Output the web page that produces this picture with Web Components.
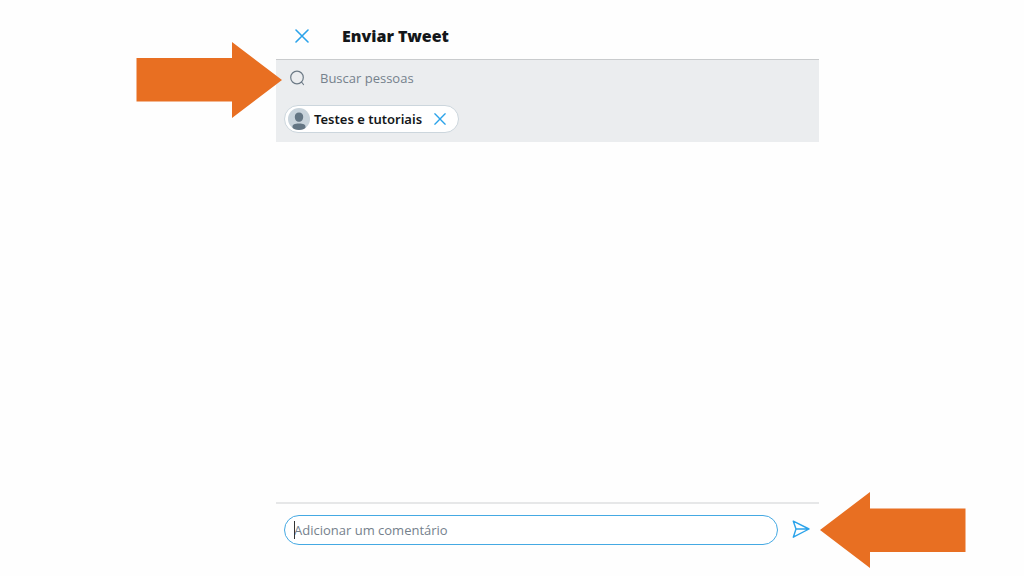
<!DOCTYPE html>
<html lang="pt-BR">
<head>
<meta charset="utf-8">
<title>Enviar Tweet</title>
<style>
body { margin: 0; background: #fefefe; font-family: "Noto Sans", "Open Sans", sans-serif; color: #14171a; }
</style>
</head>
<body>
<tutorial-page></tutorial-page>
<script>
const define = (name, html) => customElements.define(name, class extends HTMLElement {
  constructor() {
    super();
    const t = document.createElement('template');
    t.innerHTML = html;
    this.attachShadow({ mode: 'open' }).append(t.content.cloneNode(true));
  }
});

define('close-button', `
<style>
:host { display: block; flex: none; width: 14px; height: 14px; }
button { display: block; width: 100%; height: 100%; border: 0; padding: 0; background: none; cursor: pointer; }
svg { display: block; width: 100%; height: 100%; }
</style>
<button type="button" aria-label="Fechar"><svg viewBox="0 0 14 14" fill="none" stroke="#2ba3ea" stroke-width="1.6" stroke-linecap="round"><path d="M1 1L13 13M13 1L1 13"/></svg></button>`);

define('pointer-arrow', `
<style>
:host { display: block; width: 146px; height: 76px; }
:host([direction="left"]) svg { transform: rotate(180deg); }
svg { display: block; width: 100%; height: 100%; }
</style>
<svg viewBox="0 0 146 76" aria-hidden="true"><path fill="#e86f22" d="M0.5 16H96V0L146 38L96 76V59.500H0.500Z"/></svg>`);

define('dialog-header', `
<style>
:host { display: flex; align-items: center; gap: 33px; box-sizing: border-box; height: 46px; padding: 0 19px 2px; border-bottom: 1px solid #c9cbcd; }
h1 { margin: 0; font: 900 16px/24px "Noto Sans", "Open Sans", sans-serif; }
</style>
<close-button></close-button><h1><slot></slot></h1>`);

define('people-search', `
<style>
:host { display: flex; align-items: center; gap: 14px; height: 36px; padding: 0 12px; }
svg { flex: none; width: 18px; height: 18px; }
input { flex: 1; min-width: 0; border: 0; padding: 0; outline: 0; background: none; font: 13px/20px "Open Sans", "Noto Sans", sans-serif; color: #14171a; }
input::placeholder { color: #75818c; opacity: 1; }
</style>
<svg viewBox="0 0 18 18" fill="none" stroke="#6c7a86" stroke-width="1.200" stroke-linecap="round" aria-hidden="true"><circle cx="9" cy="8.500" r="6.300"/><path d="M13.500 13L15.500 15.500"/></svg>
<input type="text" aria-label="Buscar pessoas" placeholder="Buscar pessoas">`);

define('person-chip', `
<style>
:host { display: inline-flex; align-items: center; box-sizing: border-box; height: 28px; padding: 0 12px 0 3px; border: 1px solid #ccd6dd; border-radius: 14px; background: #fff; font: 600 13px/20px "Noto Sans", sans-serif; }
svg { flex: none; width: 22px; height: 22px; margin-right: 4px; }
span { padding-bottom: 1px; }
close-button { width: 12px; height: 12px; margin-left: 12px; }
</style>
<svg viewBox="0 0 22 22" aria-hidden="true"><clipPath id="c"><circle cx="11" cy="11" r="11"/></clipPath><g clip-path="url(#c)"><path fill="#c9d4dc" d="M0 0H22V22H0Z"/><path fill="#647684" d="M11 4.500C8.300 4.500 6.800 6.300 6.800 8.700C6.800 11.600 8.500 13.800 11 13.800S15.200 11.600 15.200 8.700C15.200 6.300 13.700 4.500 11 4.500ZM4.500 22V19C4.500 16.500 6.500 15.600 11 15.600S17.500 16.500 17.500 19V22Z"/></g></svg>
<span><slot></slot></span><close-button></close-button>`);

define('comment-bar', `
<style>
:host { display: flex; align-items: center; gap: 13px; box-sizing: border-box; height: 46px; padding: 8px 8px 0; border-top: 2px solid #e6e7e8; }
.field { position: relative; flex: 1; min-width: 0; }
input { display: block; box-sizing: border-box; width: 100%; height: 30px; border: 1px solid #45a9e3; border-radius: 15px; padding: 0 9px; outline: 0; background: #fff; font: 13px/20px "Open Sans", "Noto Sans", sans-serif; color: #14171a; }
input::placeholder { color: #75818c; opacity: 1; }
.caret { position: absolute; left: 10px; top: 6px; width: 1px; height: 18px; background: #333; }
button { flex: none; width: 20px; height: 20px; border: 0; padding: 0; background: none; cursor: pointer; }
svg { display: block; width: 20px; height: 20px; }
</style>
<div class="field"><input type="text" aria-label="Adicionar um comentário" placeholder="Adicionar um comentário"><span class="caret"></span></div>
<button type="button" aria-label="Enviar"><svg viewBox="0 0 20 20" fill="none" stroke="#2ba3ea" stroke-width="1.400" stroke-linejoin="round" stroke-linecap="round"><path d="M2.300 1.200L18 9L2.300 17.200L5 9ZM5 9H18"/></svg></button>`);

define('tweet-dialog', `
<style>
:host { display: flex; flex-direction: column; position: relative; }
.people { padding-bottom: 9px; background: #ebedef; }
.chips { display: flex; padding: 9px 8px 0; }
.results { flex: 1; }
.search-hint { position: absolute; right: calc(100% - 6px); top: 28px; }
.send-hint { position: absolute; left: calc(100% + 1px); bottom: -20px; }
</style>
<dialog-header>Enviar Tweet</dialog-header>
<div class="people">
<people-search></people-search>
<div class="chips"><person-chip>Testes e tutoriais</person-chip></div>
</div>
<div class="results"></div>
<comment-bar></comment-bar>
<pointer-arrow class="search-hint"></pointer-arrow>
<pointer-arrow class="send-hint" direction="left"></pointer-arrow>`);

define('tutorial-page', `
<style>
:host { display: grid; grid-template-columns: 276px minmax(0, 1fr) 205px; box-sizing: border-box; min-height: 100vh; padding: 14px 0 28px; }
tweet-dialog { grid-column: 2; }
</style>
<tweet-dialog></tweet-dialog>`);
</script>
</body>
</html>
